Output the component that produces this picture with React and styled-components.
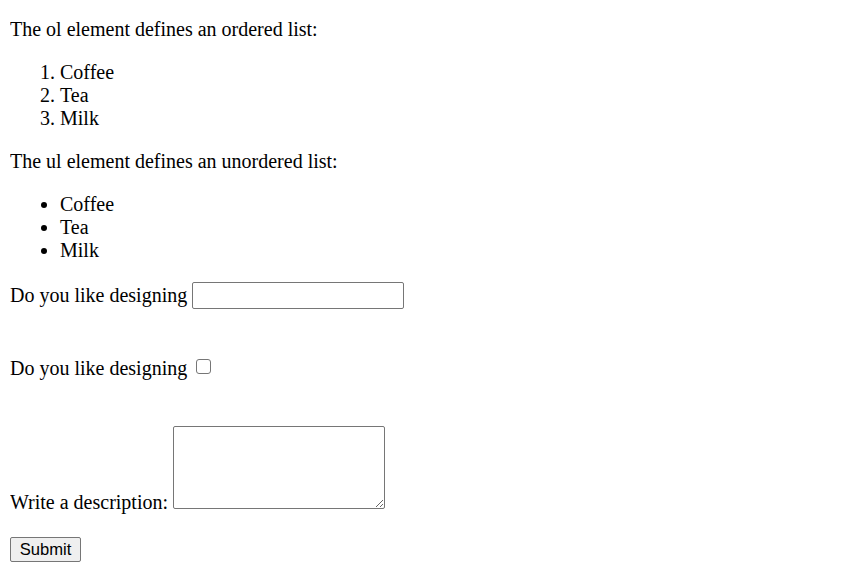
import React from 'react';
import styled, { createGlobalStyle } from 'styled-components';

const GlobalStyle = createGlobalStyle`
  body {
    margin: 0 10px 10px;
    background: #ffffff;
    color: #000000;
    font-family: "Liberation Serif", "Times New Roman", serif;
    font-size: 20px;
    line-height: 23px;
  }
`;

const Text = styled.p`
  margin: ${(props) => (props.first ? 18 : 20)}px 0 20px;
`;

const List = styled.ul`
  margin: 20px 0;
  padding-left: 50px;
  list-style-type: ${(props) => (props.ordered ? 'decimal' : 'disc')};
`;

const Form = styled.form`
  display: flex;
  flex-direction: column;
  align-items: flex-start;
`;

const Row = styled.div`
  display: flex;
  align-items: ${(props) => props.align || 'center'};
  gap: 5px;
  margin-top: ${(props) => props.top || 0}px;
`;

const Label = styled.label`
  white-space: nowrap;
`;

const TextInput = styled.input`
  box-sizing: border-box;
  width: 212px;
  height: 27px;
  margin: 0;
  padding: 1px 3px;
  border: 1px solid #767676;
  border-radius: 2px;
  background: #ffffff;
  font: 16px "Liberation Sans", Arial, sans-serif;
`;

const Check = styled.input`
  appearance: none;
  box-sizing: border-box;
  width: 15px;
  height: 15px;
  margin: 0 0 4px 4px;
  border: 1.5px solid #767676;
  border-radius: 3px;
  background: #ffffff;
`;

const TextArea = styled.textarea`
  box-sizing: border-box;
  width: 212px;
  height: 83px;
  margin: 0 0 5px 0;
  padding: 2px;
  border: 1px solid #767676;
  border-radius: 2px;
  font: 16px "Liberation Mono", monospace;
`;

const SubmitButton = styled.button`
  box-sizing: border-box;
  width: 71px;
  height: 25px;
  margin-top: 23px;
  padding: 0;
  border: 1px solid #767676;
  border-radius: 2px;
  background: #efefef;
  color: #000000;
  font: 16.6px "Liberation Sans", Arial, sans-serif;
`;

const drinks = ['Coffee', 'Tea', 'Milk'];

const App = () => (
  <>
    <GlobalStyle />
    <Text first>The ol element defines an ordered list:</Text>
    <List as="ol" ordered>
      {drinks.map((d) => (
        <li key={d}>{d}</li>
      ))}
    </List>
    <Text>The ul element defines an unordered list:</Text>
    <List>
      {drinks.map((d) => (
        <li key={d}>{d}</li>
      ))}
    </List>
    <Form onSubmit={(e) => e.preventDefault()}>
      <Row>
        <Label htmlFor="design-text">Do you like designing</Label>
        <TextInput id="design-text" type="text" />
      </Row>
      <Row top={48}>
        <Label htmlFor="design-check">Do you like designing</Label>
        <Check id="design-check" type="checkbox" />
      </Row>
      <Row top={46} align="flex-end">
        <Label htmlFor="desc">Write a description:</Label>
        <TextArea id="desc" />
      </Row>
      <SubmitButton type="submit">Submit</SubmitButton>
    </Form>
  </>
);

export default App;
